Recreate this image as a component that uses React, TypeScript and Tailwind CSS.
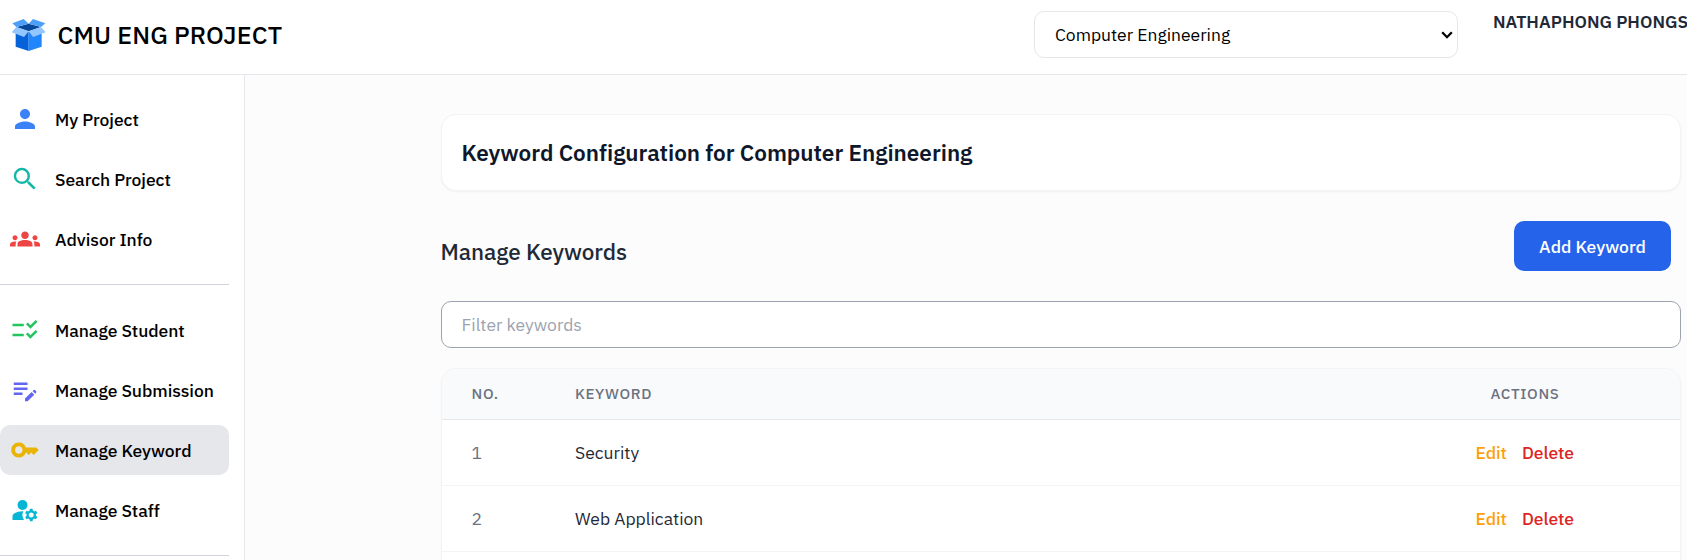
import type { IconType } from "react-icons";
import { MdPerson, MdSearch, MdGroups, MdChecklistRtl, MdEditNote, MdKey, MdManageAccounts } from "react-icons/md";

type Item = { label: string; icon: IconType; color: string; active?: boolean };

const general: Item[] = [
  { label: "My Project", icon: MdPerson, color: "text-[#3b82f6]" },
  { label: "Search Project", icon: MdSearch, color: "text-[#14b8a6]" },
  { label: "Advisor Info", icon: MdGroups, color: "text-[#ef4444]" },
];

const admin: Item[] = [
  { label: "Manage Student", icon: MdChecklistRtl, color: "text-[#22c55e]" },
  { label: "Manage Submission", icon: MdEditNote, color: "text-[#6366f1]" },
  { label: "Manage Keyword", icon: MdKey, color: "text-[#eab308]", active: true },
  { label: "Manage Staff", icon: MdManageAccounts, color: "text-[#06b6d4]" },
];

const keywords = ["Security", "Web Application"];

function BoxLogo() {
  return (
    <svg className="h-[34px] w-[35px] shrink-0" viewBox="0 0 105 102">
      <path d="M14 30 53 42v57L14 86Z" fill="#0562d8" />
      <path d="M53 42 92 30v56L53 99Z" fill="#2186fc" />
      <path d="M16 27 53 17l37 10-37 13Z" fill="#08489b" />
      <path d="M4 16 38 3l15 14-37 10Z" fill="#4c9ff8" />
      <path d="M66 3l37 13-13 11-37-10Z" fill="#4c9ff8" />
      <path d="M16 27 53 40 39 57 2 43Z" fill="#92c6ff" />
      <path d="M53 40 90 27l14 16-38 14Z" fill="#92c6ff" />
    </svg>
  );
}

function NavList({ items }: { items: Item[] }) {
  return (
    <ul className="flex flex-col gap-[10px]">
      {items.map(({ label, icon: Icon, color, active }) => (
        <li key={label}>
          <a className={`flex h-[50px] items-center gap-[15px] rounded-[10px] pl-[10px] font-medium ${active ? "bg-[#e5e7eb]" : ""}`}>
            <Icon className={`size-[30px] ${color}`} />
            <span className="tracking-[-0.05px] whitespace-nowrap">{label}</span>
          </a>
        </li>
      ))}
    </ul>
  );
}

export default function App() {
  return (
    <div className="flex h-[560px] w-[1687px] flex-col overflow-hidden bg-white font-['IBM_Plex_Sans',Roboto,sans-serif] text-[17.5px] leading-[25px] text-black">
      <header className="flex h-[75px] shrink-0 items-start border-b border-[#e5e7eb] pl-[11px]">
        <div className="flex h-[70px] items-center gap-[11.5px]">
          <BoxLogo />
          <span className="mb-[2px] text-[25px] leading-[35px] font-medium tracking-[0.12px] whitespace-nowrap">CMU ENG PROJECT</span>
        </div>
        <div className="mt-[11px] mr-[35px] ml-auto flex h-[47px] w-[424px] shrink-0 items-center justify-between rounded-[10px] border border-[#e5e7eb] pr-[4px] pl-[20px]">
          <span>Computer Engineering</span>
          <svg className="h-[8px] w-[12px]" viewBox="0 0 12 8" fill="none" stroke="#000" strokeWidth="2.3">
            <path d="m1.2 1.2 4.8 5 4.8-5" />
          </svg>
        </div>
        <span className="mt-[9px] w-[194px] shrink-0 font-semibold whitespace-nowrap text-[#1f2937]">NATHAPHONG PHONGS</span>
      </header>
      <div className="flex min-h-0 flex-1">
        <nav className="w-[245px] shrink-0 border-r border-[#e5e7eb] pt-[19px] pr-[15px]">
          <NavList items={general} />
          <hr className="my-[20px] border-[#d1d5db]" />
          <NavList items={admin} />
          <hr className="mt-[20px] border-[#d1d5db]" />
        </nav>
        <main className="flex-1 bg-[#fcfcfc] pt-[39px] pr-[6px] pl-[196px]">
          <div className="flex h-[77px] items-center rounded-[15px] border border-[#f3f4f6] bg-white pl-[19.5px] shadow-[0_1px_2px_rgba(0,0,0,0.05)]">
            <h1 className="text-[22.5px] leading-[35px] font-semibold tracking-[-0.02px] text-[#0f172a]">Keyword Configuration for Computer Engineering</h1>
          </div>
          <div className="mt-[30px] flex h-[50px] items-center justify-between pr-[10px]">
            <h2 className="mt-[11px] -ml-[0.5px] text-[22.5px] leading-[35px] font-medium tracking-[-0.06px] text-[#1f2937]">Manage Keywords</h2>
            <button className="h-[50px] w-[157px] rounded-[10px] bg-[#2563eb] font-medium text-white">Add Keyword</button>
          </div>
          <input
            className="mt-[30px] block h-[47px] w-full rounded-[10px] border border-[#9ca3af] bg-white px-[19.5px] placeholder:text-[#9ca3af]"
            placeholder="Filter keywords"
          />
          <div className="mt-[20px] h-[260px] overflow-hidden rounded-[15px] border border-[#f3f4f6] bg-white shadow-[0_1px_2px_rgba(0,0,0,0.05)]">
            <div className="grid h-[51px] grid-cols-[133px_1fr_309px] items-center border-b border-[#e5e7eb] bg-[#f9fafb] pb-[2px] text-[15px] font-medium tracking-[0.7px] text-[#6b7280]">
              <span className="pl-[29.5px]">NO.</span>
              <span>KEYWORD</span>
              <span className="pr-px text-center">ACTIONS</span>
            </div>
            {keywords.map((k, i) => (
              <div key={k} className="grid h-[66px] grid-cols-[133px_1fr_309px] items-center border-b border-[#f3f4f6] text-[#1f2937]">
                <span className="pl-[29.5px] text-[#6b7280]">{i + 1}</span>
                <span>{k}</span>
                <span className="flex justify-center gap-[15px] pr-[1.5px] font-medium tracking-[-0.05px]">
                  <a className="text-[#ff9f0a]">Edit</a>
                  <a className="text-[#dc2626]">Delete</a>
                </span>
              </div>
            ))}
          </div>
        </main>
      </div>
    </div>
  );
}
